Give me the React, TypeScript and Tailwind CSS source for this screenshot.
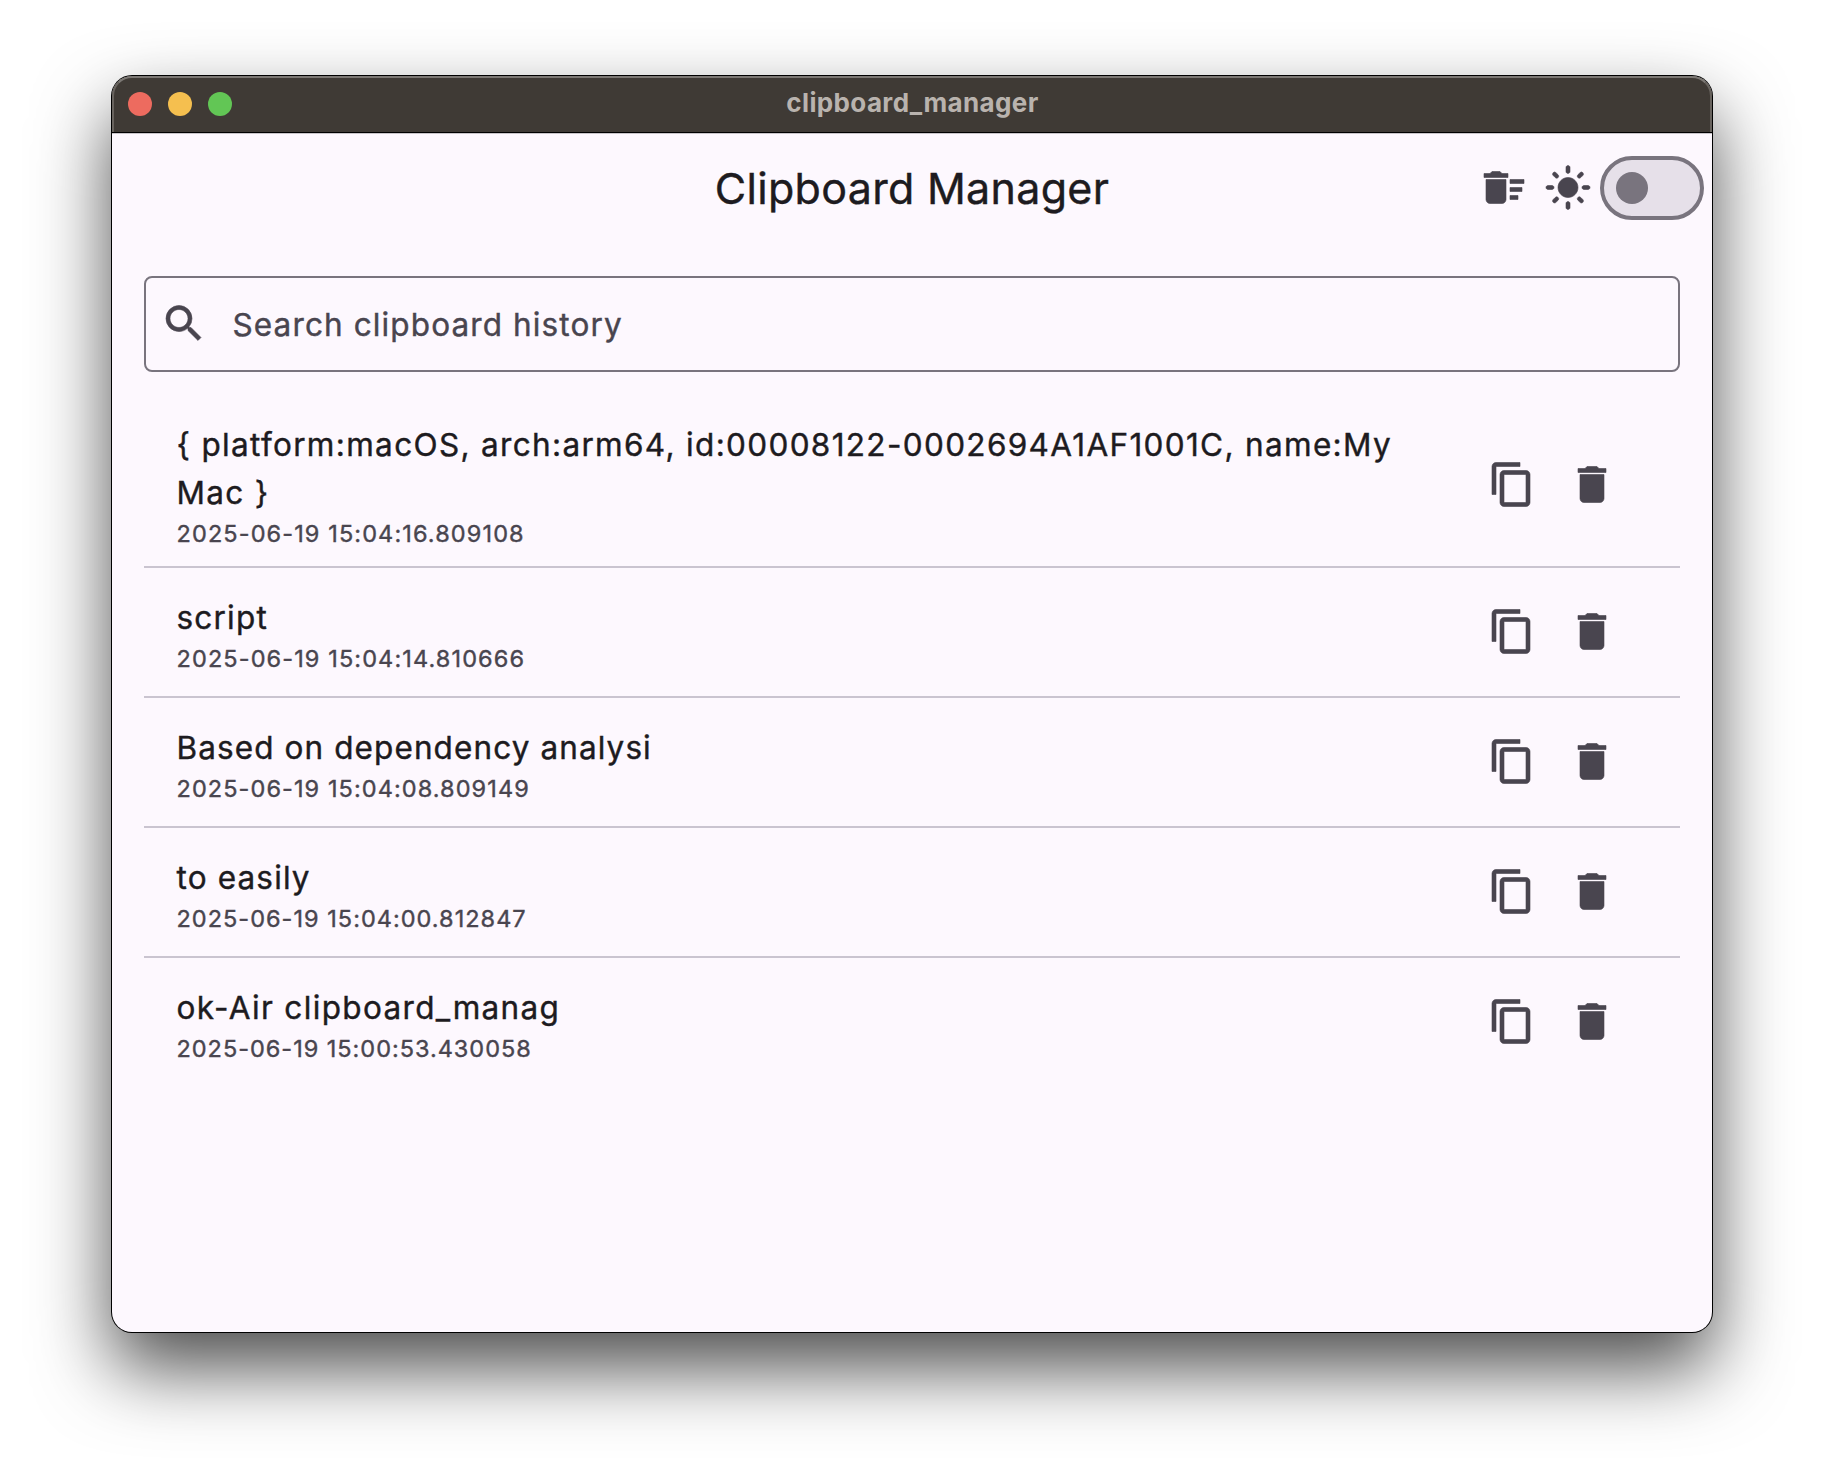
import { MdContentCopy, MdDelete, MdDeleteSweep, MdLightMode, MdSearch } from "react-icons/md";

type Entry = {
  text: string;
  time: string;
  textTracking: string;
  timeTracking: string;
};

const entries: Entry[] = [
  {
    text: "{ platform:macOS, arch:arm64, id:00008122-0002694A1AF1001C, name:My Mac }",
    time: "2025-06-19 15:04:16.809108",
    textTracking: "tracking-[1.33px]",
    timeTracking: "tracking-[1.11px]",
  },
  {
    text: "script",
    time: "2025-06-19 15:04:14.810666",
    textTracking: "tracking-[1.2px]",
    timeTracking: "tracking-[1.11px]",
  },
  {
    text: "Based on dependency analysi",
    time: "2025-06-19 15:04:08.809149",
    textTracking: "tracking-[1.1px]",
    timeTracking: "tracking-[1.08px]",
  },
  {
    text: "to easily",
    time: "2025-06-19 15:04:00.812847",
    textTracking: "tracking-[1.15px]",
    timeTracking: "tracking-[1.02px]",
  },
  {
    text: "ok-Air clipboard_manag",
    time: "2025-06-19 15:00:53.430058",
    textTracking: "tracking-[1.35px]",
    timeTracking: "tracking-[0.98px]",
  },
];

const iconClass = "size-12 shrink-0 -translate-y-[0.5px] text-[#49454f] [&>path[fill=none]]:hidden";

function TitleBar() {
  return (
    <header className="relative z-10 grid h-14 shrink-0 grid-cols-[1fr_auto_1fr] items-center rounded-t-[20px] bg-[#3f3a35] px-4 shadow-[0_1px_0_#000,0_2px_0_#c9c5ca]">
      <div className="flex gap-4">
        <span className="size-6 rounded-full bg-[#ed6b5f]" />
        <span className="size-6 rounded-full bg-[#f5bf4f]" />
        <span className="size-6 rounded-full bg-[#62c655]" />
      </div>
      <span className="pb-[3px] pl-px text-[26px] leading-8 font-bold tracking-[0.36px] text-[#b9b3ae]">
        clipboard_manager
      </span>
      <div className="pointer-events-none absolute inset-0 rounded-t-[20px] border-x-2 border-t-2 border-x-[#68635e] border-t-[#7c7874]" />
    </header>
  );
}

function AppBar() {
  return (
    <div className="grid h-28 shrink-0 grid-cols-[1fr_auto_1fr] items-center pr-2">
      <h1 className="col-start-2 pl-2 text-[43px] leading-[56px] tracking-[0.3px] text-[#1d1b20] [-webkit-text-stroke:0.4px]">
        Clipboard Manager
      </h1>
      <div className="flex items-center justify-end">
        <MdDeleteSweep strokeWidth={0.3} className={iconClass} />
        <MdLightMode strokeWidth={0.3} className={`${iconClass} ml-4`} />
        <button className="ml-2 flex h-16 w-[104px] items-center rounded-full border-4 border-[#79747e] bg-[#e6e0e9] pl-3">
          <span className="size-8 rounded-full bg-[#79747e]" />
        </button>
      </div>
    </div>
  );
}

function SearchField() {
  return (
    <div className="mx-8 mt-8 flex h-24 shrink-0 items-center rounded-lg border-2 border-[#79747e] pl-[14px]">
      <MdSearch strokeWidth={0.3} className={iconClass} />
      <span className="ml-[24.5px] pt-0.5 text-[31.5px] leading-[48px] tracking-[1.12px] text-[#49454f] [-webkit-text-stroke:0.4px]">
        Search clipboard history
      </span>
    </div>
  );
}

function Row({ entry, first, last }: { entry: Entry; first: boolean; last: boolean }) {
  return (
    <li
      className={`flex items-center pr-16 pl-[32.5px] ${first ? "h-[164px]" : "h-[130px]"} ${
        last ? "pb-0.5" : "border-b-2 border-[#cac4d0]"
      }`}
    >
      <div className={`mr-12 flex-1 [-webkit-text-stroke:0.4px] ${first ? "" : "pt-[5px]"}`}>
        <p className={`text-[31.5px] leading-[48px] text-[#1d1b20] ${entry.textTracking}`}>{entry.text}</p>
        <p className={`pt-px text-[23.5px] leading-8 text-[#49454f] ${entry.timeTracking}`}>{entry.time}</p>
      </div>
      <MdContentCopy strokeWidth={0.3} className={iconClass} />
      <MdDelete strokeWidth={0.3} className={`${iconClass} ml-8`} />
    </li>
  );
}

export default function App() {
  return (
    <div className="h-[1480px] w-[1824px] overflow-hidden bg-white px-28 pt-[76px] font-['Inter',sans-serif]">
      <div className="flex h-[1256px] w-[1600px] flex-col rounded-[20px] bg-[#fdf8fe] shadow-[0_0_0_1px_#000,0_36px_76px_rgba(0,0,0,0.7)]">
        <TitleBar />
        <AppBar />
        <SearchField />
        <ul className="mx-8 mt-8">
          {entries.map((entry, i) => (
            <Row key={entry.time} entry={entry} first={i === 0} last={i === entries.length - 1} />
          ))}
        </ul>
      </div>
    </div>
  );
}
